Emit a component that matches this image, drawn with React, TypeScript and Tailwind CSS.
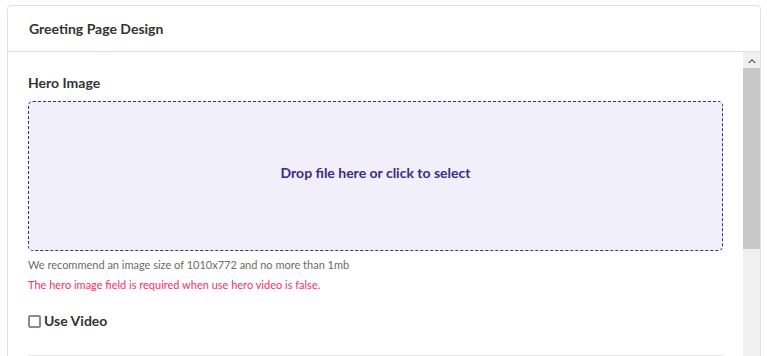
export default function App() {
  return (
    <div
      className="h-[356px] overflow-hidden bg-white pt-[5px] pl-[7px] pr-[6px]"
      style={{ fontFamily: "Lato, 'Open Sans', sans-serif" }}
    >
      <div className="h-[400px] rounded-t-[4px] border border-[#e1e1e1] bg-white flex flex-col">
        {/* Header */}
        <div className="h-[46px] shrink-0 flex items-center px-[21px] border-b border-[#e1e1e1]">
          <h2 className="text-[14px] font-bold text-[#333]">Greeting Page Design</h2>
        </div>

        {/* Body with scrollbar */}
        <div className="flex flex-1">
          <div className="flex-1 px-[20px] pt-[21px]">
            <div className="text-[14px] font-bold text-[#333] leading-[20px]">Hero Image</div>
            <div className="mt-[8px] h-[150px] rounded-[5px] border border-dashed border-[#3b2a8c] bg-[#f1effa] flex items-center justify-center cursor-pointer">
              <span className="-mt-[7px] text-[14px] font-bold text-[#3b2a8c]">Drop file here or click to select</span>
            </div>
            <p className="mt-[6px] text-[11px] leading-[16px] text-[#6b6b6b]">
              We recommend an image size of 1010x772 and no more than 1mb
            </p>
            <p className="mt-[4px] text-[11px] leading-[16px] text-[#ff2d5f]">
              The hero image field is required when use hero video is false.
            </p>
            <label className="mt-[18px] flex items-center gap-[3px] cursor-pointer">
              <span className="block w-[13px] h-[13px] rounded-[2px] border-2 border-[#8a8a96] bg-white" />
              <span className="text-[14px] font-bold text-[#333] leading-[20px]">Use Video</span>
            </label>
            <div className="mt-[24px] border-t border-[#e5e5e5]" />
          </div>

          {/* Scrollbar */}
          <div className="w-[17px] shrink-0 bg-[#f0f0f0] flex flex-col">
            <div className="h-[16px] flex items-center justify-center">
              <svg width="8" height="5" viewBox="0 0 8 5">
                <path d="M0 5 L4 1 L8 5 L6.5 5 L4 2.5 L1.5 5 Z" fill="#505050" />
              </svg>
            </div>
            <div className="h-[181px] bg-[#c8c8c8]" />
          </div>
        </div>
      </div>
    </div>
  );
}
